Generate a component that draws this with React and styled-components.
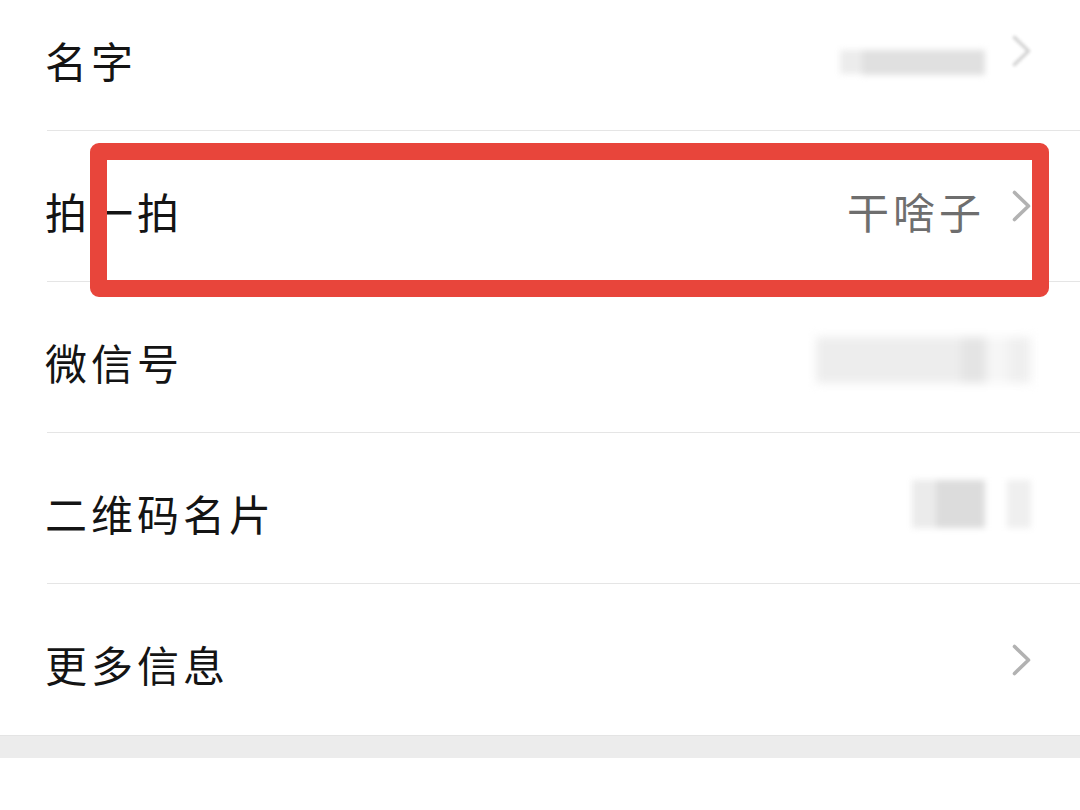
import React from "react";
import styled, { createGlobalStyle } from "styled-components";

const GlobalStyle = createGlobalStyle`
  html, body {
    margin: 0;
    padding: 0;
    background: #ffffff;
  }
  body {
    font-family: "Noto Sans CJK SC", "Noto Sans", sans-serif;
  }
`;

const Page = styled.div`
  position: relative;
  width: 1080px;
  height: 810px;
  overflow: hidden;
  background: #ffffff;
`;

const List = styled.div`
  display: flex;
  flex-direction: column;
  margin-top: -20px;
`;

const Row = styled.div`
  padding-left: 47px;
  background: #ffffff;
`;

const RowInner = styled.div`
  position: relative;
  display: flex;
  align-items: center;
  padding-right: 49px;
  border-bottom: ${(p) => (p.$last ? "none" : "1px solid #e5e5e5")};
  height: ${(p) => (p.$last ? "151px" : "150px")};
`;

const Label = styled.span`
  margin-left: -2px;
  padding-top: 8px;
  font-size: 42px;
  letter-spacing: 4px;
  color: #141414;
  font-weight: 400;
  white-space: nowrap;
`;

const Spacer = styled.div`
  flex: 1;
`;

const Value = styled.span`
  padding-top: 8px;
  margin-right: 27px;
  font-size: 42px;
  letter-spacing: 4px;
  color: #6e6e6e;
  white-space: nowrap;
`;

const BlurGroup = styled.div`
  display: flex;
  align-items: center;
  gap: ${(p) => p.$gap || 0}px;
  margin-right: ${(p) => p.$mr || 0}px;
  margin-top: ${(p) => p.$mt || 0}px;
  filter: blur(${(p) => p.$blur || 3}px);
`;

const BlurBlock = styled.div`
  width: ${(p) => p.$w}px;
  height: ${(p) => p.$h}px;
  background: ${(p) => p.$c};
`;

const ChevronWrap = styled.div`
  display: flex;
  width: 19px;
  height: 32px;
  opacity: ${(p) => (p.$faded ? 0.55 : 1)};
  filter: ${(p) => (p.$faded ? "blur(1.5px)" : "none")};
  margin-top: ${(p) => p.$mt || 0}px;
`;

const Band = styled.div`
  height: 22px;
  background: #ececec;
  border-top: 1px solid #e4e4e4;
`;

const Highlight = styled.div`
  position: absolute;
  left: 90px;
  top: 143px;
  width: 959px;
  height: 154px;
  box-sizing: border-box;
  border: 17px solid #e8453b;
  border-radius: 9px;
  pointer-events: none;
`;

const Chevron = ({ faded, mt }) => (
  <ChevronWrap $faded={faded} $mt={mt}>
    <svg width="19" height="32" viewBox="0 0 19 32" fill="none">
      <path
        d="M2.5 2.5 L16.5 16 L2.5 29.5"
        stroke="#b2b2b2"
        strokeWidth="3.6"
        strokeLinecap="round"
        strokeLinejoin="round"
      />
    </svg>
  </ChevronWrap>
);

export default function App() {
  return (
    <Page>
      <GlobalStyle />
      <List>
        <Row>
          <RowInner>
            <Label>名字</Label>
            <Spacer />
            <BlurGroup $mr={27} $mt={14}>
              <BlurBlock $w={22} $h={24} $c="#ececec" />
              <BlurBlock $w={123} $h={25} $c="#e0e0e0" />
            </BlurGroup>
            <Chevron faded mt={-8} />
          </RowInner>
        </Row>
        <Row>
          <RowInner>
            <Label>拍一拍</Label>
            <Spacer />
            <Value>干啥子</Value>
            <Chevron />
          </RowInner>
        </Row>
        <Row>
          <RowInner>
            <Label>微信号</Label>
            <Spacer />
            <BlurGroup $mt={6} $blur={5}>
              <BlurBlock $w={145} $h={46} $c="#ededed" />
              <BlurBlock $w={25} $h={46} $c="#e4e4e4" />
              <BlurBlock $w={23} $h={46} $c="#f6f6f6" />
              <BlurBlock $w={22} $h={46} $c="#efefef" />
            </BlurGroup>
          </RowInner>
        </Row>
        <Row>
          <RowInner>
            <Label>二维码名片</Label>
            <Spacer />
            <BlurGroup $mt={-8}>
              <BlurBlock $w={24} $h={48} $c="#ebebeb" />
              <BlurBlock $w={49} $h={48} $c="#dcdcdc" />
              <BlurBlock $w={22} $h={48} $c="#ffffff" />
              <BlurBlock $w={24} $h={48} $c="#efefef" />
            </BlurGroup>
          </RowInner>
        </Row>
        <Row>
          <RowInner $last>
            <Label>更多信息</Label>
            <Spacer />
            <Chevron />
          </RowInner>
        </Row>
      </List>
      <Band />
      <Highlight />
    </Page>
  );
}
